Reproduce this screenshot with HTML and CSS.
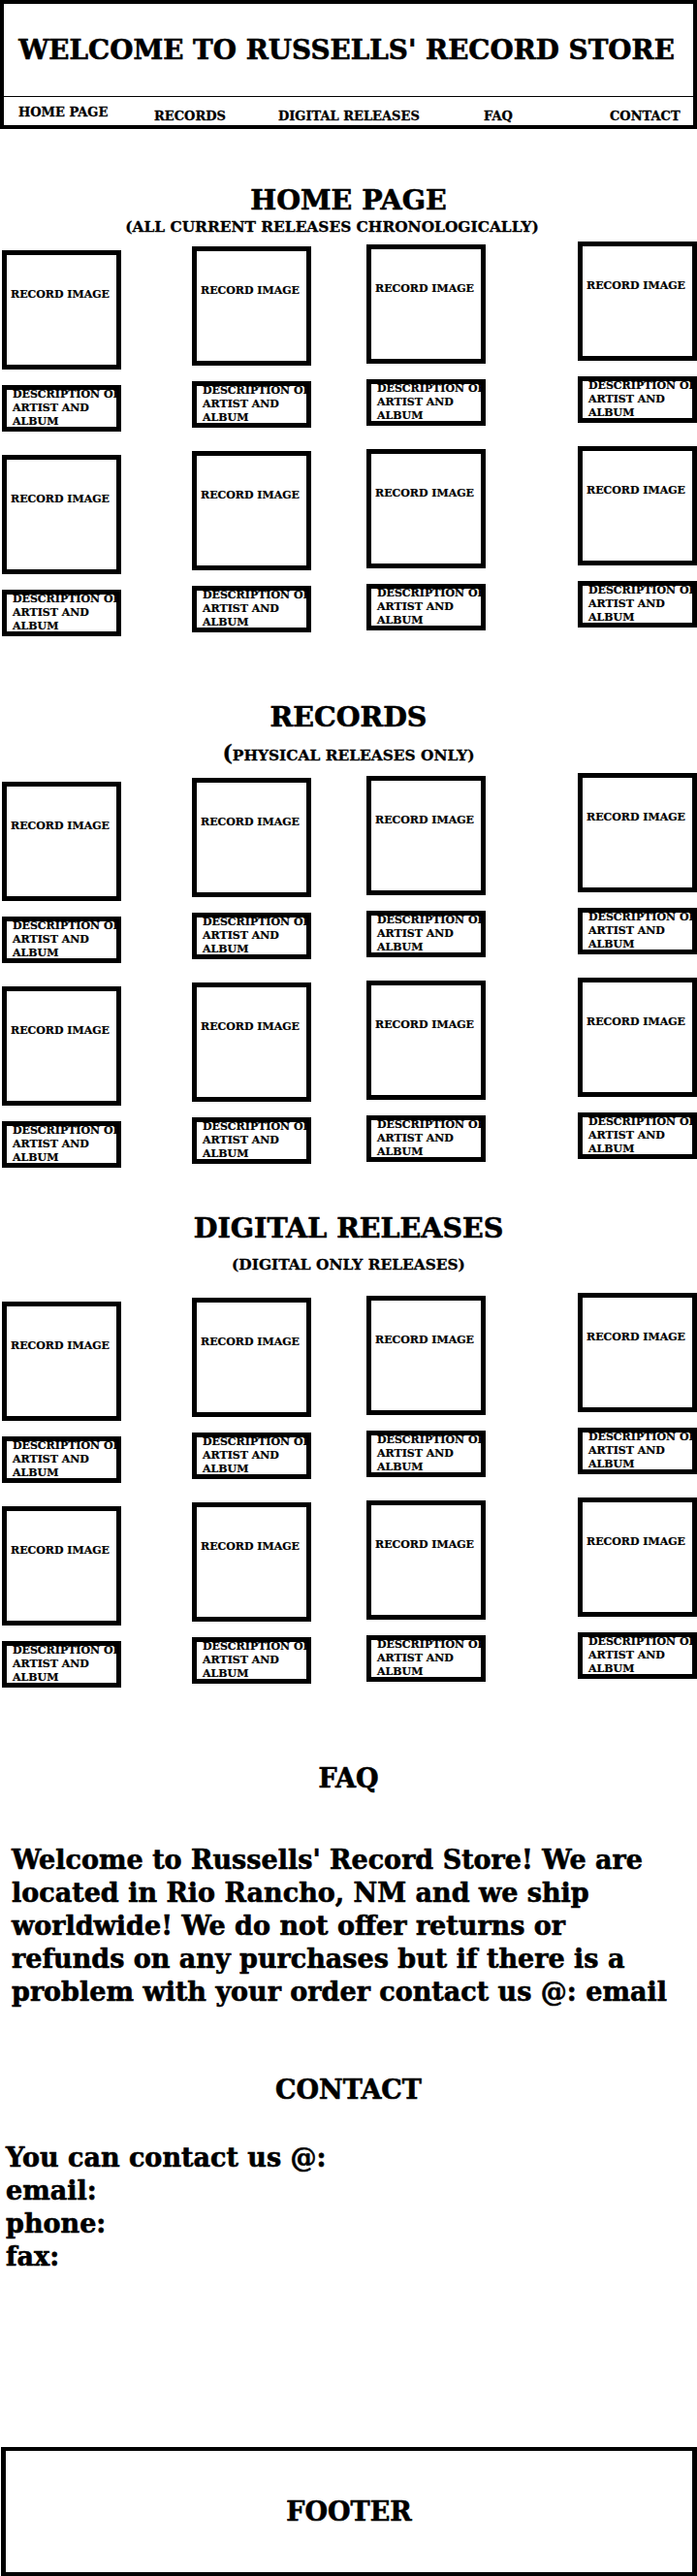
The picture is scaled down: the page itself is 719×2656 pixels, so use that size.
FILE: index.html
```html
<!DOCTYPE html>
<html lang="en">
<head>
<meta charset="utf-8">
<title>Russells' Record Store</title>
<link rel="stylesheet" href="styles.css">
</head>
<body>
<header class="site-header">
  <div class="title-bar"><h1 class="site-title">WELCOME TO RUSSELLS' RECORD STORE</h1></div>
  <nav class="main-nav">
    <a class="nav-item nav-home">HOME PAGE</a>
    <a class="nav-item">RECORDS</a>
    <a class="nav-item">DIGITAL RELEASES</a>
    <a class="nav-item">FAQ</a>
    <a class="nav-item">CONTACT</a>
  </nav>
</header>

<main>
  <section class="section section-home">
    <h2 class="section-title">HOME PAGE</h2>
    <p class="section-sub">(ALL CURRENT RELEASES CHRONOLOGICALLY)</p>
    <div class="card-grid">
      <div class="card"><div class="record-image">RECORD IMAGE</div><div class="record-desc"><p>DESCRIPTION OF ARTIST AND ALBUM</p></div></div>
      <div class="card"><div class="record-image">RECORD IMAGE</div><div class="record-desc"><p>DESCRIPTION OF ARTIST AND ALBUM</p></div></div>
      <div class="card"><div class="record-image">RECORD IMAGE</div><div class="record-desc"><p>DESCRIPTION OF ARTIST AND ALBUM</p></div></div>
      <div class="card"><div class="record-image">RECORD IMAGE</div><div class="record-desc"><p>DESCRIPTION OF ARTIST AND ALBUM</p></div></div>
      <div class="card"><div class="record-image">RECORD IMAGE</div><div class="record-desc"><p>DESCRIPTION OF ARTIST AND ALBUM</p></div></div>
      <div class="card"><div class="record-image">RECORD IMAGE</div><div class="record-desc"><p>DESCRIPTION OF ARTIST AND ALBUM</p></div></div>
      <div class="card"><div class="record-image">RECORD IMAGE</div><div class="record-desc"><p>DESCRIPTION OF ARTIST AND ALBUM</p></div></div>
      <div class="card"><div class="record-image">RECORD IMAGE</div><div class="record-desc"><p>DESCRIPTION OF ARTIST AND ALBUM</p></div></div>
    </div>
  </section>

  <section class="section section-records">
    <h2 class="section-title">RECORDS</h2>
    <p class="section-sub"><span class="big-paren">(</span>PHYSICAL RELEASES ONLY)</p>
    <div class="card-grid">
      <div class="card"><div class="record-image">RECORD IMAGE</div><div class="record-desc"><p>DESCRIPTION OF ARTIST AND ALBUM</p></div></div>
      <div class="card"><div class="record-image">RECORD IMAGE</div><div class="record-desc"><p>DESCRIPTION OF ARTIST AND ALBUM</p></div></div>
      <div class="card"><div class="record-image">RECORD IMAGE</div><div class="record-desc"><p>DESCRIPTION OF ARTIST AND ALBUM</p></div></div>
      <div class="card"><div class="record-image">RECORD IMAGE</div><div class="record-desc"><p>DESCRIPTION OF ARTIST AND ALBUM</p></div></div>
      <div class="card"><div class="record-image">RECORD IMAGE</div><div class="record-desc"><p>DESCRIPTION OF ARTIST AND ALBUM</p></div></div>
      <div class="card"><div class="record-image">RECORD IMAGE</div><div class="record-desc"><p>DESCRIPTION OF ARTIST AND ALBUM</p></div></div>
      <div class="card"><div class="record-image">RECORD IMAGE</div><div class="record-desc"><p>DESCRIPTION OF ARTIST AND ALBUM</p></div></div>
      <div class="card"><div class="record-image">RECORD IMAGE</div><div class="record-desc"><p>DESCRIPTION OF ARTIST AND ALBUM</p></div></div>
    </div>
  </section>

  <section class="section section-digital">
    <h2 class="section-title">DIGITAL RELEASES</h2>
    <p class="section-sub">(DIGITAL ONLY RELEASES)</p>
    <div class="card-grid">
      <div class="card"><div class="record-image">RECORD IMAGE</div><div class="record-desc"><p>DESCRIPTION OF ARTIST AND ALBUM</p></div></div>
      <div class="card"><div class="record-image">RECORD IMAGE</div><div class="record-desc"><p>DESCRIPTION OF ARTIST AND ALBUM</p></div></div>
      <div class="card"><div class="record-image">RECORD IMAGE</div><div class="record-desc"><p>DESCRIPTION OF ARTIST AND ALBUM</p></div></div>
      <div class="card"><div class="record-image">RECORD IMAGE</div><div class="record-desc"><p>DESCRIPTION OF ARTIST AND ALBUM</p></div></div>
      <div class="card"><div class="record-image">RECORD IMAGE</div><div class="record-desc"><p>DESCRIPTION OF ARTIST AND ALBUM</p></div></div>
      <div class="card"><div class="record-image">RECORD IMAGE</div><div class="record-desc"><p>DESCRIPTION OF ARTIST AND ALBUM</p></div></div>
      <div class="card"><div class="record-image">RECORD IMAGE</div><div class="record-desc"><p>DESCRIPTION OF ARTIST AND ALBUM</p></div></div>
      <div class="card"><div class="record-image">RECORD IMAGE</div><div class="record-desc"><p>DESCRIPTION OF ARTIST AND ALBUM</p></div></div>
    </div>
  </section>

  <section class="section section-faq">
    <h2 class="small-title">FAQ</h2>
    <p class="faq-text">Welcome to Russells' Record Store! We are located in Rio Rancho, NM and we ship worldwide! We do not offer returns or refunds on any purchases but if there is a problem with your order contact us @: email</p>
  </section>

  <section class="section section-contact">
    <h2 class="small-title">CONTACT</h2>
    <p class="contact-text">
      <span class="contact-line">You can contact us @:</span>
      <span class="contact-line">email:</span>
      <span class="contact-line">phone:</span>
      <span class="contact-line">fax:</span>
    </p>
  </section>
</main>

<footer class="site-footer">
  <p class="footer-label">FOOTER</p>
</footer>
</body>
</html>
```

FILE: styles.css
```css
* { box-sizing: border-box; }

html, body {
  margin: 0;
  padding: 0;
  background: #fff;
}

body {
  font-family: "DejaVu Serif", "Liberation Serif", serif;
  font-weight: bold;
  color: #000;
  width: 719px;
}

/* Header */
.site-header {
  height: 133px;
  border: 4px solid #000;
}

.title-bar {
  height: 96px;
  border-bottom: 1px solid #000;
  display: flex;
  align-items: center;
  justify-content: center;
}

.site-title {
  margin: 0;
  font-size: 27.8px;
  line-height: 34px;
  font-weight: bold;
  white-space: nowrap;
  padding-right: 4px;
  -webkit-text-stroke: 0.6px #000;
}

.main-nav {
  height: 28px;
  display: grid;
  grid-template-columns: 140px 128px 212px 130px auto;
  align-items: start;
  padding-left: 15px;
  padding-top: 12px;
  font-size: 13px;
  line-height: 16px;
}

.nav-item {
  color: #000;
  text-decoration: none;
  white-space: nowrap;
  -webkit-text-stroke: 0.3px #000;
}

.nav-home {
  margin-top: -4px;
}

/* Sections */
.section-title {
  margin: 0;
  text-align: center;
  font-size: 28.5px;
  line-height: 34px;
  -webkit-text-stroke: 0.6px #000;
}

.section-sub {
  margin: 0;
  text-align: center;
  font-size: 15.4px;
  line-height: 18px;
  -webkit-text-stroke: 0.3px #000;
}

.big-paren {
  font-size: 22px;
  line-height: 0;
}

.section-home { padding-top: 56px; }
.section-home .section-sub { margin-top: 2px; margin-bottom: 6px; padding-right: 34px; }

.section-records { margin-top: 66px; }
.section-records .section-sub { margin-top: 14px; margin-bottom: 9px; }

.section-digital { margin-top: 45px; }
.section-digital .section-sub { margin-top: 12px; margin-bottom: 20px; }

/* Cards */
.card-grid {
  display: grid;
  grid-template-columns: 196px 180px 218px 123px;
  row-gap: 15px;
  align-items: start;
  padding-left: 2px;
}

.card { width: 123px; }
.card:nth-child(4n+1) { margin-top: 9px; }
.card:nth-child(4n+2) { margin-top: 5px; }
.card:nth-child(4n+3) { margin-top: 3px; }
.card:nth-child(4n+4) { margin-top: 0; }

.record-image {
  width: 123px;
  height: 123px;
  border: 5px solid #000;
  padding: 34px 0 0 4px;
  font-size: 11px;
  white-space: nowrap;
  overflow: hidden;
  -webkit-text-stroke: 0.2px #000;
}

.record-desc {
  width: 123px;
  height: 48px;
  margin-top: 16px;
  border: 5px solid #000;
  padding: 0 0 0 6px;
  overflow: hidden;
  font-size: 11px;
  line-height: 14px;
  -webkit-text-stroke: 0.2px #000;
}

.record-desc p {
  margin: -2px 0 0;
  width: 118px;
}

/* FAQ / contact */
.small-title {
  margin: 0;
  text-align: center;
  font-size: 27px;
  line-height: 34px;
  -webkit-text-stroke: 0.6px #000;
}

.section-faq { margin-top: 77px; }

.faq-text {
  margin: 50px 0 0;
  padding: 0 12px;
  font-size: 27px;
  line-height: 34px;
  -webkit-text-stroke: 0.6px #000;
}

.section-contact { margin-top: 67px; }

.contact-text {
  margin: 36px 0 0;
  padding-left: 6px;
  font-size: 27px;
  line-height: 34px;
  -webkit-text-stroke: 0.6px #000;
}

.contact-line { display: block; }

/* Footer */
.site-footer {
  margin: 179px 0 0 1px;
  height: 133px;
  border: 4px solid #000;
  border-left-width: 5px;
  border-right-width: 5px;
  display: flex;
  align-items: center;
  justify-content: center;
}

.footer-label {
  margin: 0;
  font-size: 27px;
  line-height: 34px;
  -webkit-text-stroke: 0.6px #000;
}
```
